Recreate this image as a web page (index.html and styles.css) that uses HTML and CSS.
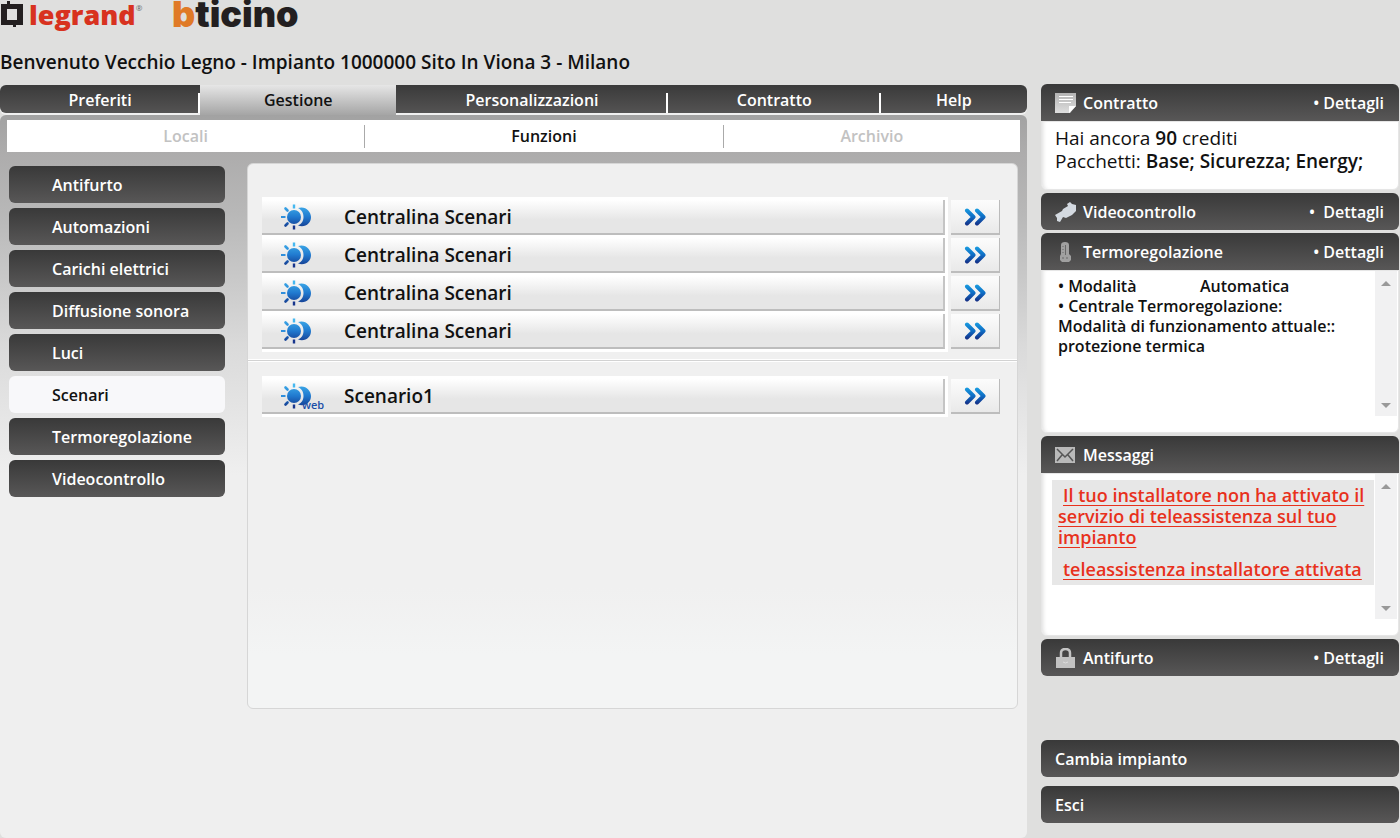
FILE: index.html
```html
<!DOCTYPE html>
<html lang="it">
<head>
    <meta charset="UTF-8">
    <meta name="viewport" content="width=device-width, initial-scale=1.0">
    <title>Gestione - Scenari</title>
    <link rel="stylesheet" href="styles.css">
</head>
<body>

<svg class="defs" width="0" height="0" aria-hidden="true">
    <defs>
        <linearGradient id="blue" x1="0" y1="0" x2="0" y2="28" gradientUnits="userSpaceOnUse">
            <stop offset="0" stop-color="#45b8f0"/>
            <stop offset="0.5" stop-color="#2079cf"/>
            <stop offset="1" stop-color="#122a7c"/>
        </linearGradient>
        <linearGradient id="arrow" x1="0" y1="0" x2="0" y2="18" gradientUnits="userSpaceOnUse">
            <stop offset="0" stop-color="#1ba0e2"/>
            <stop offset="0.5" stop-color="#0e6cc4"/>
            <stop offset="1" stop-color="#16297f"/>
        </linearGradient>
        <linearGradient id="grey" x1="0" y1="0" x2="0" y2="1">
            <stop offset="0" stop-color="#b4b4b4"/>
            <stop offset="1" stop-color="#dedede"/>
        </linearGradient>
    </defs>
    <symbol id="icon-scene" viewBox="0 0 32 28">
        <path d="M18 5C25 2.500 31 8 31 14C31 20.500 25 25 18 22.500C22 21 23.500 17.500 23.500 14C23.500 10 22 7 18 5Z" fill="url(#blue)"/>
        <circle cx="14" cy="14" r="7" fill="url(#blue)"/>
        <path d="M5.500 5.500L7.500 7.500M5.500 22.500L7.500 20.500" stroke="url(#blue)" stroke-width="2.600" stroke-linecap="round" fill="none"/>
        <path d="M1 13H5.500V15H1Z" fill="#2f8fdc"/>
        <path d="M12.800 1.500H15.200V5.500H12.800Z" fill="#45b8f0"/>
        <path d="M12.800 22.500H15.200V26.500H12.800Z" fill="#17358c"/>
    </symbol>
    <symbol id="icon-arrows" viewBox="0 0 22 18">
        <path d="M3 2.500L9.500 9L3 15.500M13 2.500L19.500 9L13 15.500" stroke="url(#arrow)" stroke-width="4" stroke-linecap="round" stroke-linejoin="round" fill="none"/>
    </symbol>
</svg>

<header class="header">
    <div class="logos">
        <svg class="legrand-mark" viewBox="0 0 24 28" width="24" height="28" aria-hidden="true">
            <path d="M1 4H7V1H10V4H23V25H16V27H13V25H1ZM7 9V20H17V9Z" fill="#231f20" fill-rule="evenodd"/>
        </svg>
        <span class="legrand">legrand<sup>®</sup></span>
        <span class="bticino"><span class="b">b</span>ticino</span>
    </div>
    <h1 class="welcome">Benvenuto Vecchio Legno - Impianto 1000000 Sito In Viona 3 - Milano</h1>
</header>

<div class="page">
    <main class="main">
        <nav class="tabs">
            <a href="#" class="tab tab-1">Preferiti</a>
            <a href="#" class="tab tab-2 active">Gestione</a>
            <a href="#" class="tab tab-3">Personalizzazioni</a>
            <a href="#" class="tab tab-4">Contratto</a>
            <a href="#" class="tab tab-5">Help</a>
        </nav>

        <div class="panel">
            <nav class="subnav">
                <a href="#" class="sub-1">Locali</a>
                <a href="#" class="sub-2 active">Funzioni</a>
                <a href="#" class="sub-3">Archivio</a>
            </nav>

            <div class="columns">
                <nav class="menu">
                    <a href="#">Antifurto</a>
                    <a href="#">Automazioni</a>
                    <a href="#">Carichi elettrici</a>
                    <a href="#">Diffusione sonora</a>
                    <a href="#">Luci</a>
                    <a href="#" class="active">Scenari</a>
                    <a href="#">Termoregolazione</a>
                    <a href="#">Videocontrollo</a>
                </nav>

                <section class="content">
                    <ul class="scenes">
                        <li>
                            <a href="#" class="scene"><span><svg class="scene-icon"><use href="#icon-scene"/></svg>Centralina Scenari</span></a>
                            <button class="go" aria-label="Apri"><svg><use href="#icon-arrows"/></svg></button>
                        </li>
                        <li>
                            <a href="#" class="scene"><span><svg class="scene-icon"><use href="#icon-scene"/></svg>Centralina Scenari</span></a>
                            <button class="go" aria-label="Apri"><svg><use href="#icon-arrows"/></svg></button>
                        </li>
                        <li>
                            <a href="#" class="scene"><span><svg class="scene-icon"><use href="#icon-scene"/></svg>Centralina Scenari</span></a>
                            <button class="go" aria-label="Apri"><svg><use href="#icon-arrows"/></svg></button>
                        </li>
                        <li>
                            <a href="#" class="scene"><span><svg class="scene-icon"><use href="#icon-scene"/></svg>Centralina Scenari</span></a>
                            <button class="go" aria-label="Apri"><svg><use href="#icon-arrows"/></svg></button>
                        </li>
                    </ul>
                    <hr>
                    <ul class="scenes">
                        <li>
                            <a href="#" class="scene"><span><svg class="scene-icon"><use href="#icon-scene"/></svg><small class="web">web</small>Scenario1</span></a>
                            <button class="go" aria-label="Apri"><svg><use href="#icon-arrows"/></svg></button>
                        </li>
                    </ul>
                </section>
            </div>
        </div>
    </main>

    <aside class="sidebar">
        <section class="box">
            <h2>
                <svg viewBox="0 0 22 20" aria-hidden="true">
                    <path d="M0 0H21V13L15 20H0Z" fill="url(#grey)"/>
                    <path d="M14 20V13H21Z" fill="#fff"/>
                    <path d="M4 3.500H18M4 6.500H18M4 9.500H16" stroke="#fff" stroke-width="1"/>
                </svg>
                Contratto <a href="#">• Dettagli</a>
            </h2>
            <div class="box-body credits">
                <p>Hai ancora <b>90</b> crediti</p>
                <p>Pacchetti: <b>Base; Sicurezza; Energy;</b></p>
            </div>
        </section>

        <section class="box">
            <h2>
                <svg viewBox="0 0 22 20" aria-hidden="true">
                    <path d="M0 13L7 9L8 7L13 4L12 2L15 0L17 2L21 3V9L17 13L11 16L8 15L5 20L2 19V16Z" fill="#d3d9e0"/>
                </svg>
                Videocontrollo <a href="#">•&nbsp; Dettagli</a>
            </h2>
        </section>

        <section class="box">
            <h2>
                <svg viewBox="0 0 22 20" aria-hidden="true">
                    <path d="M6 3Q6 0 10 0Q14 0 14 3V12L16 14V18L14 20H7L5 18V14L6 12Z" fill="#a0a0a0"/>
                    <path d="M10.500 3V13M8 4V5M8 7V8M8 10V11M8 15V17M12 15V17" stroke="#686868" stroke-width="1"/>
                </svg>
                Termoregolazione <a href="#">• Dettagli</a>
            </h2>
            <div class="box-body scrolling">
                <div class="status">
                    <p class="pair"><span>• Modalità</span><span>Automatica</span></p>
                    <p>• Centrale Termoregolazione:</p>
                    <p>Modalità di funzionamento attuale::<br>protezione termica</p>
                </div>
                <div class="scrollbar">
                    <button class="up" aria-label="Su"></button>
                    <button class="down" aria-label="Giù"></button>
                </div>
            </div>
        </section>

        <section class="box">
            <h2>
                <svg viewBox="0 0 22 20" aria-hidden="true">
                    <path d="M0 2H20V18H0Z" fill="#b9b9b9"/>
                    <path d="M2 4L10 12L18 4M2 16L7 10M18 16L13 10" stroke="#555" stroke-width="1.500" fill="none"/>
                </svg>
                Messaggi
            </h2>
            <div class="box-body scrolling">
                <div class="messages">
                    <p><a href="#">Il tuo installatore non ha attivato il servizio di teleassistenza sul tuo impianto</a></p>
                    <p><a href="#">teleassistenza installatore attivata</a></p>
                </div>
                <div class="scrollbar">
                    <button class="up" aria-label="Su"></button>
                    <button class="down" aria-label="Giù"></button>
                </div>
            </div>
        </section>

        <section class="box">
            <h2>
                <svg viewBox="0 0 22 20" aria-hidden="true">
                    <path d="M6 10V5Q6 1 10.500 1Q15 1 15 5V10" stroke="#c4c4c4" stroke-width="2.500" fill="none"/>
                    <path d="M1 9H20V20H1Z" fill="#c2c2c2"/>
                    <path d="M8 14Q10.500 16 13 14" stroke="#ddd" stroke-width="1" fill="none"/>
                </svg>
                Antifurto <a href="#">• Dettagli</a>
            </h2>
        </section>

        <div class="actions">
            <button>Cambia impianto</button>
            <button>Esci</button>
        </div>
    </aside>
</div>

</body>
</html>
```
FILE: styles.css
```css
* {
    box-sizing: border-box;
}
body {
    margin: 0;
    min-height: 100vh;
    display: flex;
    flex-direction: column;
    background-color: #dfdfde;
    font-family: "Trebuchet MS", "Open Sans", sans-serif;
    font-size: 16px;
    font-weight: 600;
    color: #111;
}
p, h1, h2, ul {
    margin: 0;
    padding: 0;
}
a {
    color: inherit;
    text-decoration: none;
}
button {
    font: inherit;
    border: none;
    padding: 0;
    cursor: pointer;
}
.defs {
    position: absolute;
}

/* header */
.header {
    height: 84px;
}
.logos {
    display: flex;
    height: 48px;
    line-height: 30px;
}
.legrand {
    margin-left: 5px;
    width: 143px;
    font-family: "Open Sans", sans-serif;
    font-size: 27px;
    font-weight: 800;
    color: #d8321f;
}
.legrand sup {
    font-size: 8px;
    font-weight: 400;
    line-height: 8px;
    vertical-align: 14px;
    color: #666;
}
.bticino {
    font-family: Inter, sans-serif;
    font-size: 36px;
    font-weight: 900;
    line-height: 28px;
    color: #231f20;
}
.bticino .b {
    color: #e07a26;
}
.welcome {
    font-size: 19px;
    line-height: 28px;
    font-weight: 600;
}

.page {
    flex: 1;
    display: flex;
    gap: 14px;
    padding-right: 1px;
}
.main {
    flex: 1;
    display: flex;
    flex-direction: column;
}

/* top tabs */
.tabs {
    display: flex;
    margin-top: 1px;
    border-radius: 6px;
    background: linear-gradient(#3a3a3a, #545353);
    box-shadow: 0 2px #f0f0f0;
    color: #fff;
}
.tab {
    height: 28px;
    line-height: 30px;
    text-align: center;
    background: linear-gradient(#fff, #fff) right bottom / 2px 20px no-repeat;
}
.tab-1 { flex: 200; }
.tab-2 { flex: 196; }
.tab-3 { flex: 271; }
.tab-4 { flex: 213; }
.tab-5 { flex: 146; background: none; }
.tab.active {
    height: 30px;
    margin-bottom: -2px;
    color: #111;
    background: linear-gradient(#e6e6e6, #a5a5a5);
}

.panel {
    flex: 1;
    margin-top: 2px;
    padding: 5px 7px 16px;
    border-radius: 6px;
    background: linear-gradient(#a2a2a2, #adacac 38px, #b8b8b8 100px, #dadada 230px, #efefef 360px);
}
.subnav {
    display: flex;
    align-items: center;
    height: 32px;
    background-color: #fff;
    color: #c2c2c2;
    text-align: center;
}
.subnav a {
    line-height: 23px;
    border-right: 1px solid #aaa;
}
.subnav .active {
    color: #111;
}
.sub-1 { flex: 358; }
.sub-2 { flex: 358; }
.subnav .sub-3 { flex: 297; border-right: none; }

.columns {
    display: flex;
    align-items: flex-start;
    gap: 22px;
    padding: 11px 2px 0;
}

/* left menu */
.menu {
    width: 216px;
    padding-top: 3px;
    display: flex;
    flex-direction: column;
    gap: 5px;
}
.menu a {
    height: 37px;
    line-height: 38px;
    padding-left: 43px;
    border-radius: 6px;
    background: linear-gradient(#393939, #585757);
    color: #fff;
}
.menu a.active {
    background: #f8f8fa;
    color: #111;
}

.content {
    flex: 1;
    min-height: 546px;
    padding-top: 33px;
    border: 1px solid #d6d6d6;
    border-radius: 6px;
    background: linear-gradient(#f0f0f0 78%, #f3f4f4 90%);
}
.content hr {
    height: 3px;
    margin: 10px 0 14px;
    border: 1px solid #fff;
    border-width: 1px 0;
    background-color: #d2d2d2;
}
.scenes {
    list-style: none;
    padding: 0 17px 0 14px;
}
.scenes li {
    display: flex;
    align-items: flex-end;
    gap: 3px;
    height: 38px;
}
.scene {
    flex: 1;
    border-top: 3px solid #fff;
    border-right: 3px solid #fff;
    box-shadow: 0 3px #fff;
}
.scene span {
    display: flex;
    align-items: center;
    position: relative;
    height: 35px;
    padding: 0 0 0 18px;
    border-right: 2px solid #c4c4c4;
    border-bottom: 2px solid #bdbdbd;
    background: linear-gradient(#fff, #e6e6e6 60%);
    font-size: 19px;
}
.scene-icon {
    width: 32px;
    height: 28px;
    margin: 0 32px 0 0;
}
.web {
    position: absolute;
    left: 40px;
    top: 18px;
    font-size: 11px;
    line-height: 16px;
    color: #1c4fa8;
}
.go {
    display: flex;
    align-items: center;
    justify-content: center;
    width: 49px;
    height: 35px;
    border-right: 1px solid #bbb;
    border-bottom: 2px solid #bdbdbd;
    background: linear-gradient(#fcfcfc, #e9e9e9);
}
.go svg {
    width: 22px;
    height: 18px;
}

/* right column */
.sidebar {
    width: 358px;
    display: flex;
    flex-direction: column;
    gap: 3px;
}
.box h2 {
    display: flex;
    align-items: center;
    height: 37px;
    padding: 0 15px 0 14px;
    border-radius: 6px;
    background: linear-gradient(#393939, #585757);
    color: #fff;
    font-size: 16px;
    font-weight: 600;
}
.box h2:not(:last-child) {
    border-radius: 6px 6px 0 0;
}
.box h2 svg {
    width: 22px;
    height: 20px;
    margin-right: 6px;
}
.box h2 a {
    margin-left: auto;
}
.box-body {
    padding: 5px 13px;
    border: 1px solid #e6e6e6;
    border-radius: 0 0 6px 6px;
    background-color: #fff;
    box-shadow: inset 4px 0 4px -3px #ddd;
}
.credits {
    height: 69px;
    font-size: 19px;
    line-height: 23px;
    font-weight: 400;
}
.credits b {
    font-weight: 600;
}
.scrolling {
    display: flex;
    align-items: flex-start;
    justify-content: space-between;
    height: 163px;
    padding: 0 1px 0 10px;
}
.status {
    padding: 5px 0 0 6px;
    font-size: 16px;
    line-height: 20px;
}
.pair {
    display: flex;
}
.pair span:first-child {
    width: 142px;
}
.messages {
    width: 322px;
    margin-top: 6px;
    padding: 5px 6px;
    background-color: #e7e7e7;
    color: #e8311c;
    font-size: 18px;
    line-height: 21px;
}
.messages p {
    text-indent: 5px;
}
.messages p + p {
    margin-top: 11px;
}
.messages a {
    text-decoration: underline;
    text-underline-offset: 3px;
}
.scrollbar {
    display: flex;
    flex-direction: column;
    justify-content: space-between;
    align-items: center;
    width: 22px;
    height: 145px;
    padding: 10px 0 8px;
    background-color: #f1f1f2;
}
.scrollbar button {
    width: 10px;
    height: 5px;
    background-color: #999;
}
.up {
    clip-path: polygon(50% 0, 100% 100%, 0 100%);
}
.down {
    clip-path: polygon(0 0, 100% 0, 50% 100%);
}
.actions {
    display: flex;
    flex-direction: column;
    gap: 9px;
    padding-top: 61px;
}
.actions button {
    height: 37px;
    padding-left: 14px;
    border-radius: 6px;
    background: linear-gradient(#393939, #585757);
    color: #fff;
    text-align: left;
}
```
